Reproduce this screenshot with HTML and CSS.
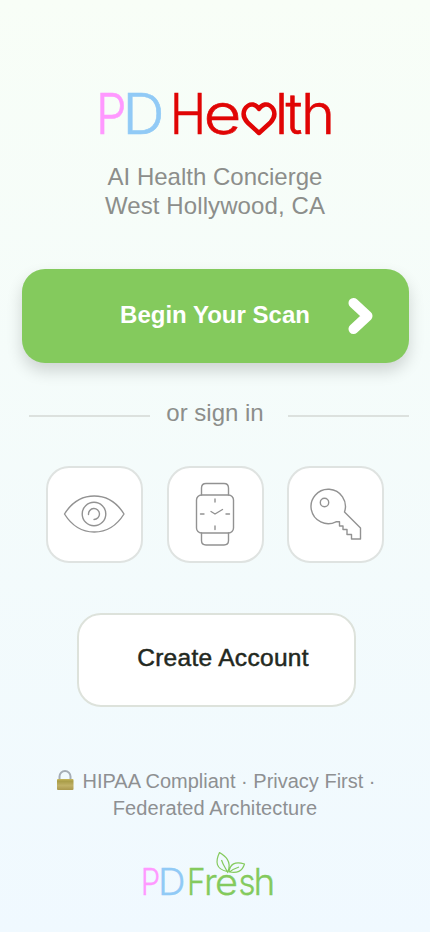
FILE: index.html
```html
<!DOCTYPE html>
<html lang="en">
<head>
<meta charset="utf-8">
<meta name="viewport" content="width=device-width, initial-scale=1">
<title>PD Health</title>
<link rel="stylesheet" href="styles.css">
</head>
<body>
<main class="screen">
  <header class="intro">
    <svg class="logo" viewBox="0 0 236 50" role="img" aria-label="PD Health">
      <g class="logo-type">
        <text class="pink" x="-1" y="44" textLength="30.500" lengthAdjust="spacingAndGlyphs">P</text>
        <text class="blue" x="25.500" y="44" textLength="42" lengthAdjust="spacingAndGlyphs">D</text>
        <text class="red" x="73" y="44" textLength="36" lengthAdjust="spacingAndGlyphs">H</text>
        <text class="red" x="106.500" y="44" textLength="38" lengthAdjust="spacingAndGlyphs">e</text>
        <text class="red" x="178" y="44">l</text>
        <text class="red" x="188.500" y="44">t</text>
        <text class="red" x="204" y="44" textLength="34" lengthAdjust="spacingAndGlyphs">h</text>
      </g>
      <path class="heart" d="M162 43L150.500 32.500C142 23 149.500 13.500 156 14.500Q160 15.500 162 19Q164 15.500 168 14.500C174.500 13.500 182 23 173.500 32.500Z"/>
    </svg>
    <p class="tagline">AI Health Concierge<br><span class="place">West Hollywood, CA</span></p>
  </header>

  <button class="scan"><span>Begin Your Scan</span>
    <svg class="chevron" viewBox="0 0 24 36"><path d="M5 5L19 18L5 31"/></svg>
  </button>

  <div class="divider"><i></i><span>or sign in</span><i></i></div>

  <div class="methods">
    <button class="method" aria-label="Eye scan">
      <svg viewBox="0 0 96 96"><path d="M18.500 48C33.500 24 63 24 78 48C63 72 33.500 72 18.500 48Z"/><circle cx="48" cy="48" r="11.800"/><path d="M42.500 48.500A5.500 5.500 0 1 1 48 53.500"/></svg>
    </button>
    <button class="method" aria-label="Watch">
      <svg viewBox="0 0 96 96"><rect x="29.500" y="29" width="37" height="38" rx="5"/><path d="M34.500 29V22Q34.500 17.500 39 17.500H57Q61.500 17.500 61.500 22V29M34.500 67V74.500Q34.500 79 39 79H57Q61.500 79 61.500 74.500V67M48 33V36M48 60V63.500M33.500 48H37M59 48H62.500M44 45.500L48 48L55.500 43.500"/></svg>
    </button>
    <button class="method key" aria-label="Passkey">
      <svg viewBox="0 0 96 96"><path d="M57.500 46A17.200 17.200 0 1 0 49 55.800H52.500V60H56V63.500H60V68.500H64.500V73H73.500V62L57.500 46"/><circle cx="37.500" cy="36.500" r="4.200"/></svg>
    </button>
  </div>

  <button class="create">Create Account</button>

  <footer class="footer">
    <p class="legal"><svg class="lock" viewBox="0 0 18 22"><defs><linearGradient id="brass" x2="0" y2="1"><stop stop-color="#c8b85c"/><stop offset=".2" stop-color="#a99d48"/><stop offset=".6" stop-color="#c0b167"/><stop offset="1" stop-color="#aa984d"/></linearGradient></defs><path class="shackle" d="M3.500 11V7.500A5.500 5.500 0 0 1 14.500 7.500V11"/><rect x="1" y="10" width="16.500" height="11" rx="1" fill="url(#brass)"/></svg>HIPAA Compliant · Privacy First ·<br><span class="second">Federated Architecture</span></p>
    <svg class="fresh" viewBox="0 0 134 48" role="img" aria-label="PD Fresh">
      <g class="fresh-type">
        <text class="pink" x="-.3" y="43" textLength="19.500" lengthAdjust="spacingAndGlyphs">P</text>
        <text class="blue" x="17" y="43" textLength="27.500" lengthAdjust="spacingAndGlyphs">D</text>
        <text class="green" x="46" y="43" textLength="18.500" lengthAdjust="spacingAndGlyphs">F</text>
        <text class="green" x="63" y="43">r</text>
        <text class="green" x="74" y="43" textLength="23" lengthAdjust="spacingAndGlyphs">e</text>
        <text class="green" x="97.500" y="43" textLength="17" lengthAdjust="spacingAndGlyphs">s</text>
        <text class="green" x="112.500" y="43">h</text>
      </g>
      <path class="leaf" d="M86 19.500C75 17 74 10 78.500 .5C84 4 91 9 87 19.500M87 21C85 17 82 13 80.500 8M88 20C89 12 94 9 103.500 12C101 20 96 21 88.500 20C91 18 95 16 98 15"/>
    </svg>
  </footer>
</main>
</body>
</html>
```
FILE: styles.css
```css
* { box-sizing: border-box; }
body { margin: 0; font-family: "Liberation Sans", Arial, sans-serif; }
button { padding: 0; font: inherit; }
p { margin: 0; }
.screen {
  height: 932px;
  padding: 90px 22px 0;
  display: flex;
  flex-direction: column;
  align-items: center;
  overflow: hidden;
  background: linear-gradient(#f8fef7, #f0f9ff);
}
.intro { display: flex; flex-direction: column; align-items: center; }
.logo { width: 236px; height: 50px; overflow: visible; }
.logo-type { font: 300 56.400px Inter, sans-serif; stroke-width: .6; }
.pink { fill: #ff99ff; stroke: #ff99ff; }
.blue { fill: #91caf6; stroke: #91caf6; }
.red { fill: #e00505; stroke: #e00505; }
.green { fill: #84ca5d; stroke: #84ca5d; }
.heart { fill: none; stroke: #e00505; stroke-width: 4.500; stroke-linejoin: round; }
.tagline { margin-top: 22px; font-size: 24px; line-height: 29px; text-align: center; color: #8c8e8b; white-space: nowrap; }
.place { letter-spacing: .1px; }
.scan {
  position: relative;
  width: 387px;
  height: 94px;
  margin-top: 49px;
  padding-bottom: 2px;
  border: 0;
  border-radius: 23px;
  background: #84ca5d;
  color: #fff;
  font-size: 24px;
  font-weight: bold;
  box-shadow: 0 8px 16px rgba(0, 0, 0, .16);
}
.chevron { position: absolute; right: 35.500px; top: 29px; width: 25px; height: 36px; fill: none; stroke: #fff; stroke-width: 10; stroke-linecap: round; stroke-linejoin: round; }
.divider { width: 380px; height: 30px; margin: 35px 0 0 8px; display: flex; justify-content: space-between; }
.divider i { width: 121px; height: 2px; margin-top: 17px; background: #dce1de; }
.divider span { font-size: 24px; line-height: 30px; margin-right: 8px; color: #8c8e8b; }
.methods { display: flex; gap: 24px; margin-top: 38px; }
.method { width: 97px; height: 97px; padding-bottom: 1px; border: 2px solid #dfe3e1; border-radius: 23px; background: #fff; display: flex; align-items: center; justify-content: center; }
.key { margin: 0 1px 0 -1px; }
.method svg { flex: none; width: 96px; height: 96px; fill: none; stroke: #929292; stroke-width: 1.400; stroke-linejoin: round; stroke-linecap: round; }
.create { width: 279px; height: 94px; margin: 50px 0 0 2px; padding: 0 0 4px 14px; border: 2px solid #dde2db; border-radius: 24px; background: #fff; color: #232820; font-size: 24.500px; letter-spacing: .3px; -webkit-text-stroke: .5px #232820; }
.footer { display: flex; flex-direction: column; align-items: center; margin-top: 61px; }
.legal { padding-left: 2px; font-size: 20px; line-height: 27px; color: #8e9092; white-space: nowrap; text-align: center; }
.second { margin-right: 2px; letter-spacing: .1px; }
.lock { width: 18px; height: 22px; margin-right: 8px; vertical-align: -3px; }
.shackle { fill: none; stroke: #a5adb5; stroke-width: 2; }
.fresh { width: 134px; height: 48px; margin: 30px 14px 0 0; overflow: visible; }
.fresh-type { font: 300 37px Inter, sans-serif; stroke-width: .3; }
.leaf { fill: none; stroke: #84ca5d; stroke-width: 1.200; stroke-linejoin: round; }
```
